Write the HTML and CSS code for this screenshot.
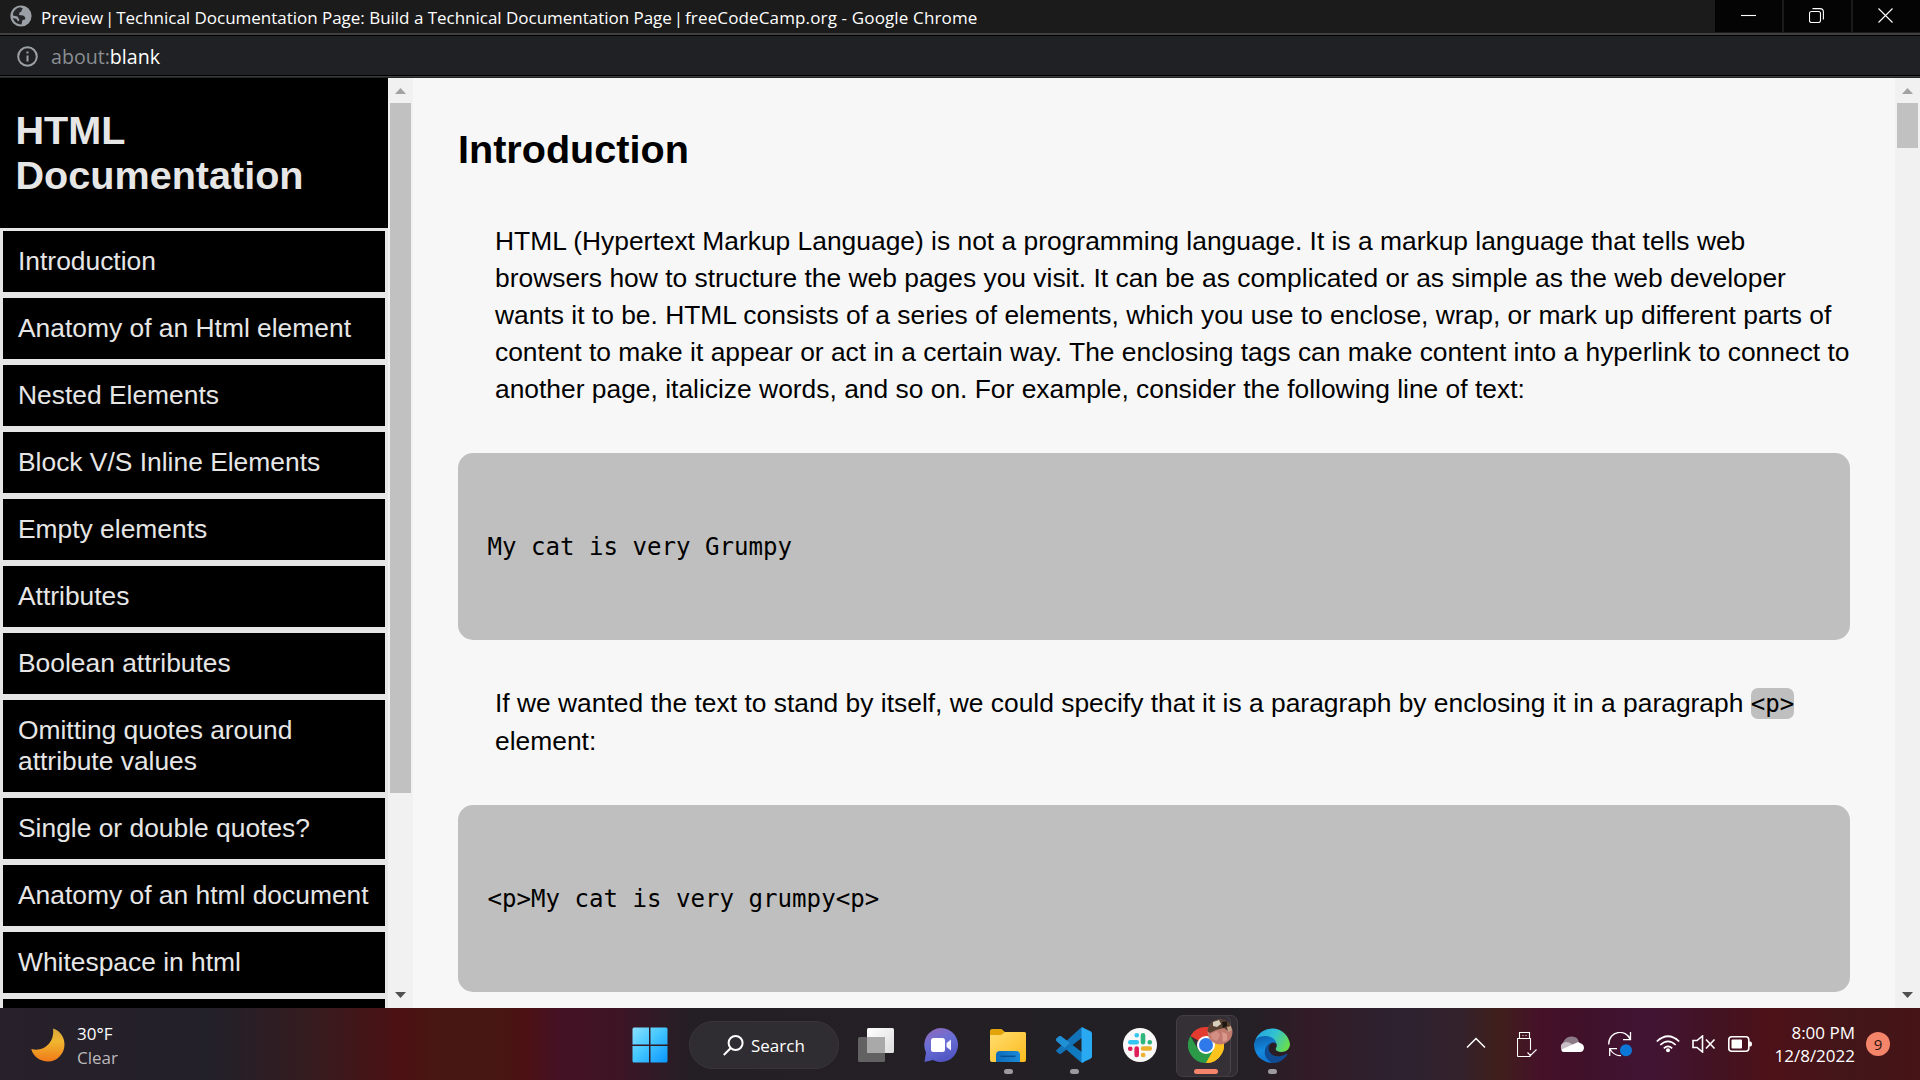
FILE: index.html
```html
<!DOCTYPE html>
<html lang="en">
<head>
<meta charset="utf-8">
<title>Technical Documentation Page</title>
<link rel="stylesheet" href="styles.css">
</head>
<body>
<header class="titlebar">
  <svg class="globe" width="22" height="22" viewBox="0 0 22 22"><circle cx="11" cy="11" r="10.6" fill="#9aa0a6"/><path d="M3 8.500Q4.500 3.500 10 2.300L13 3.400Q11 5 11.500 6.500L9.500 7.500 9 10 13 10.500Q16 12 15 14.500L12.500 15 11.500 19.500Q5 19.500 2.700 13L6.500 14 8 16.500 9.500 15 7.500 11.500 3 10.500Z" fill="#26272a"/><path d="M14 4Q18.500 5.500 19.300 10L17 9.500 16 7Z" fill="#9aa0a6"/></svg>
  <span class="title">Preview <span class="bar">|</span> Technical Documentation Page: Build a Technical Documentation Page <span class="bar">|</span> <span class="site">freeCodeCamp.org - Google Chrome</span></span>
  <div class="controls">
    <span class="control"><svg width="15" height="15" viewBox="0 0 15 15"><path d="M0 7.500H15"/></svg></span>
    <span class="control"><svg width="15" height="15" viewBox="0 0 15 15"><rect x=".5" y="3.500" width="11" height="11" rx="2"/><path d="M3.500 .6H11Q14.400 .6 14.400 4V11.500"/></svg></span>
    <span class="control"><svg width="15" height="15" viewBox="0 0 15 15"><path d="M.5 .5L14.500 14.500M14.500 .5L.5 14.500"/></svg></span>
  </div>
</header>
<div class="addressbar">
  <svg width="21" height="21" viewBox="0 0 21 21" fill="none" stroke="#9aa0a6" stroke-width="2"><circle cx="10.500" cy="10.500" r="9.300"/><path d="M10.500 9.500V15.500M10.500 5.500V7.600"/></svg>
  <span class="url"><span class="scheme">about:</span>blank</span>
</div>
<div class="viewport">
  <nav class="sidebar">
    <h1 class="brand">HTML<br>Documentation</h1>
    <ul class="links">
      <li>Introduction</li>
      <li>Anatomy of an Html element</li>
      <li>Nested Elements</li>
      <li>Block V/S Inline Elements</li>
      <li>Empty elements</li>
      <li>Attributes</li>
      <li>Boolean attributes</li>
      <li>Omitting quotes around<br>attribute values</li>
      <li>Single or double quotes?</li>
      <li>Anatomy of an html document</li>
      <li>Whitespace in html</li>
      <li></li>
    </ul>
  </nav>
  <div class="scrollbar">
    <i class="arrow up"></i><i class="thumb thumb-nav"></i><i class="arrow down"></i>
  </div>
  <main class="content">
    <h2>Introduction</h2>
    <p>HTML (Hypertext Markup Language) is not a programming language. It is a markup language that tells web<br>browsers how to structure the web pages you visit. It can be as complicated or as simple as the web developer<br>wants it to be. HTML consists of a series of elements, which you use to enclose, wrap, or mark up different parts of<br>content to make it appear or act in a certain way. The enclosing tags can make content into a hyperlink to connect to<br>another page, italicize words, and so on. For example, consider the following line of text:</p>
    <pre>My cat is very Grumpy</pre>
    <p class="second">If we wanted the text to stand by itself, we could specify that it is a paragraph by enclosing it in a paragraph <code>&lt;p&gt;</code><br>element:</p>
    <pre>&lt;p&gt;My cat is very grumpy&lt;p&gt;</pre>
  </main>
  <div class="scrollbar">
    <i class="arrow up"></i><i class="thumb thumb-page"></i><i class="arrow down"></i>
  </div>
</div>
<footer class="taskbar">
  <div class="weather">
    <svg width="34" height="34" viewBox="0 0 34 34"><defs><linearGradient id="moon" x1="0" y1="0" x2="0" y2="1"><stop offset="0" stop-color="#d9a83c"/><stop offset=".4" stop-color="#f0b630"/><stop offset="1" stop-color="#f07a18"/></linearGradient></defs><path d="M22 .5C29 2.500 33.500 9 33.500 16.500C33.500 26 26 33.500 17 33.500C9 33.500 2 28.500 .3 21C12 24.500 24 15 22 .5Z" fill="url(#moon)"/></svg>
    <div class="forecast"><span>30°F</span><span class="sky">Clear</span></div>
  </div>
  <div class="apps">
    <div class="app"><svg width="36" height="36" viewBox="0 0 36 36"><defs><linearGradient id="win" gradientUnits="userSpaceOnUse" x1="0" y1="0" x2="36" y2="36"><stop offset="0" stop-color="#8be0ff"/><stop offset=".45" stop-color="#47c8ff"/><stop offset="1" stop-color="#0895ff"/></linearGradient></defs><path d="M2 .5H17V17.500H.5V2Q.5 .5 2 .5ZM18.500 .5H34Q35.500 .5 35.500 2V17.500H18.500ZM.5 19H17V35.500H2Q.5 35.500 .5 34ZM18.500 19H35.500V34Q35.500 35.500 34 35.500H18.500Z" fill="url(#win)"/></svg></div>
    <div class="search"><svg width="21" height="21" viewBox="0 0 21 21" fill="none" stroke="#fff" stroke-width="2"><circle cx="12.600" cy="8" r="7"/><path d="M7.500 13.200L.8 20"/></svg><span>Search</span></div>
    <div class="app"><svg width="36" height="36" viewBox="0 0 36 36"><defs><linearGradient id="tv" x1="0" y1="0" x2="1" y2="1"><stop offset="0" stop-color="#fff"/><stop offset="1" stop-color="#dcdcdc"/></linearGradient></defs><rect x="0" y="10" width="27" height="25" rx="1.500" fill="#626262"/><rect x="9" y="1" width="27" height="25" rx="1.500" fill="url(#tv)"/><rect x="9" y="10" width="18" height="16" fill="#a9a9a9"/></svg></div>
    <div class="app chat"><svg width="36" height="36" viewBox="0 0 36 36"><defs><linearGradient id="chat" x1="0" y1="0" x2=".4" y2="1"><stop offset="0" stop-color="#9468b4"/><stop offset=".5" stop-color="#6a6fd6"/><stop offset="1" stop-color="#5357c4"/></linearGradient></defs><path d="M18 1A17 17 0 1 1 10 33L1.500 35 3 25.500A17 17 0 0 1 18 1Z" fill="url(#chat)"/><rect x="8" y="11" width="14" height="14" rx="2.500" fill="#fff"/><path d="M23.500 16L28 12.500V23.500L23.500 20Z" fill="#f1f1ff"/></svg></div>
    <div class="app open"><svg width="36" height="36" viewBox="0 0 36 36"><defs><linearGradient id="folder" x1="0" y1="0" x2="1" y2="1"><stop offset="0" stop-color="#ffdd70"/><stop offset="1" stop-color="#fdbb1c"/></linearGradient><linearGradient id="tray" x1="0" y1="0" x2="1" y2="0"><stop offset="0" stop-color="#0e6cba"/><stop offset="1" stop-color="#1a8ad8"/></linearGradient></defs><path d="M0 4Q0 2 2 2H11.500L15 5H34Q36 5 36 7V12H0Z" fill="#e2a30b"/><path d="M0 8H11L15 5H34Q36 5 36 7V33Q36 35 34 35H2Q0 35 0 33Z" fill="url(#folder)"/><path d="M6 35V28Q6 24 10 24H26Q30 24 30 28V35Z" fill="url(#tray)"/><path d="M10.500 29.300H25.500" stroke="#0a4f91" stroke-width="1.500"/></svg></div>
    <div class="app open"><svg width="36" height="36" viewBox="0 0 36 36"><path d="M.5 11.500L3 9.300Q4 8.700 5 9.300L27 26V35.500Q25.500 35.800 24 34.500L.5 14Q-.3 12.700 .5 11.500Z" fill="#0f7ac0"/><path d="M.5 23L24 1.500Q25.500 .1 27 .6V10L5 26.800Q4 27.400 3 26.700L.5 24.500Q-.2 23.700 .5 23Z" fill="#1273b8"/><path d="M.5 11.500L3 9.300Q4 8.700 5 9.300L14 16 8.500 21 .5 14Q-.3 12.700 .5 11.500Z" fill="#2090d5"/><path d="M26 .3L34.500 4.300Q36 5 36 6.500V29.500Q36 31 34.500 31.700L26 35.700Q27 35 27 33V3Q27 1 26 .3Z" fill="#28a9f2"/><path d="M25.500 .6Q27.500 .5 28 1V35Q27 36 25.500 35.500Z" fill="#28a9f2"/></svg></div>
    <div class="app"><svg width="34" height="34" viewBox="0 0 34 34"><circle cx="17" cy="17" r="17" fill="#f8f8f8"/><g stroke-linecap="round" stroke-width="4.600"><path d="M13.800 7.300H13.700M7.300 14.200H13.800" stroke="#36c5f0"/><path d="M20 7.300V14.200M26.800 14.200H26.700" stroke="#2eb67d"/><path d="M20 20.500H26.800M20.200 27H20.100" stroke="#ecb22e"/><path d="M13.700 20.500V27M7.300 20.700H7.200" stroke="#e01e5a"/></g></svg></div>
    <div class="app active"><svg width="36" height="36" viewBox="0 0 36 36"><path d="M18 18L2.410 9A18 18 0 0 1 33.590 9Z" fill="#e33b2e"/><path d="M18 18L33.590 9A18 18 0 0 1 18 36Z" fill="#fcc31e"/><path d="M2.410 9A18 18 0 0 0 18 36L25.800 22.500 10.200 22.500Z" fill="#2b9b49"/><path d="M18 9H33.590A18 18 0 0 1 18 36L25.800 22.500Z" fill="#fcc31e"/><circle cx="18" cy="18" r="9" fill="#fff"/><circle cx="18" cy="18" r="7" fill="#3079ea"/></svg>
      <svg class="avatar" width="26" height="26" viewBox="0 0 26 26"><defs><clipPath id="face"><circle cx="13" cy="13" r="12.500"/></clipPath></defs><g clip-path="url(#face)"><rect width="26" height="26" fill="#c07a6e"/><path d="M0 0H26V10L21 12 17 9 9 11 3 14 0 12Z" fill="#57402f"/><path d="M6 3L12 1 14 5 10 8 6 7Z" fill="#d8cfbd"/><path d="M15 3L20 2 20 7 16 9Z" fill="#1e1713"/><path d="M20 8L24 7 25 11 21 13Z" fill="#c5a48c"/><path d="M4 15L10 12 13 16 10 22 5 20Z" fill="#d38f83"/><path d="M15 13L20 15 20 21 16 23Z" fill="#da988c"/></g></svg></div>
    <div class="app open"><svg width="36" height="36" viewBox="0 0 36 36"><defs><linearGradient id="wave" x1="0" y1=".2" x2="1" y2=".6"><stop offset="0" stop-color="#22a3e0"/><stop offset=".5" stop-color="#32c2d3"/><stop offset="1" stop-color="#68dd4c"/></linearGradient><linearGradient id="sea" x1="0" y1="0" x2=".3" y2="1"><stop offset="0" stop-color="#0d5ba8"/><stop offset=".6" stop-color="#1489df"/><stop offset="1" stop-color="#1176cf"/></linearGradient></defs><path d="M1 14A18 18 0 0 1 36 17C36 22 32 25 27.500 25C23 25 21 23 22 21C25 16 19 10 12 10Q5 10 1 14Z" fill="url(#wave)"/><path d="M0 18C0 12 5 9 11 9C18 9 22 13 22.500 17C18 13 13 18 14 24C15 30 19 34 24 34.800A18 18 0 0 1 0 18Z" fill="url(#sea)"/><path d="M16.500 15.500C12.500 19 14 31 27 29Q31 28 33 26.500Q34 27.500 32 29.500Q27 35.500 20 36C10 34 7 21 16.500 15.500Z" fill="#104c93"/></svg></div>
  </div>
  <div class="tray">
    <svg class="chevron" width="20" height="12" viewBox="0 0 20 12"><path d="M1 10.500L10 1.500 19 10.500" stroke-width="1.500"/></svg>
    <svg class="usb" width="20" height="25" viewBox="0 0 20 25"><path d="M2.500 6.500V.5H12.500V6.500M.5 24.500V6.500H13.500V18M.5 24.500H13V22M5.500 3.500H6.500M8.500 3.500H9.500M10.500 20.500L13.500 23.500 19.500 17.500"/></svg>
    <svg class="cloud" width="24" height="17" viewBox="0 0 24 17"><path d="M4 16A4.500 5.500 0 0 1 3 6.500Q6 0 12 .5Q18 .5 19 6.500L10 13Z" fill="#8d7a87" stroke="none"/><path d="M1 9Q4 4.500 9 6.500L17 11 6 15Q0 16 1 9Z" fill="#c9bfc7" stroke="none"/><path d="M4 16Q1 15.500 1.500 13.500L16 7Q18 5.500 20.500 7.200Q24 8.500 24 12Q23.500 16 20 16Z" fill="#fff" stroke="none"/></svg>
    <svg class="sync" width="25" height="25" viewBox="0 0 25 25"><path d="M.7 12.500C.7 -1.500 18 -3.500 22.300 7.500M22.500 0V7.700H15M1.700 24V16.700H9M1.900 17Q6 24 13 23.600" stroke-width="1.300"/><circle cx="18" cy="18.300" r="6" fill="#0b78d8" stroke="none"/></svg>
    <svg class="wifi" width="24" height="18" viewBox="0 0 24 18"><path d="M.8 6.500Q12-4 23.200 6.500M4.300 10Q12 2.700 19.700 10M7.800 13.300Q12 9.300 16.200 13.300" stroke-width="1.700"/><circle cx="12" cy="15.300" r="2" fill="#fff" stroke="none"/></svg>
    <svg class="volume" width="24" height="18" viewBox="0 0 24 18"><path d="M1 5.500H5L10.500 1V17L5 12.500H1ZM14 4.500L22.500 13.500M22.500 4.500L14 13.500" stroke-width="1.600"/></svg>
    <svg class="battery" width="25" height="16" viewBox="0 0 25 16"><rect x=".8" y=".8" width="20" height="14.400" rx="3" stroke-width="1.600"/><rect x="3.500" y="3.500" width="10.500" height="9" rx="1" fill="#fff" stroke="none"/><path d="M21 5.500H22.500Q24 5.500 24 8Q24 10.500 22.500 10.500H21Z" fill="#fff" stroke="none"/></svg>
    <div class="clock"><span class="time">8:00 PM</span><span>12/8/2022</span></div>
    <span class="count">9</span>
  </div>
</footer>
</body>
</html>
```

FILE: styles.css
```css
* { box-sizing: border-box; }
html, body { height: 100%; overflow: hidden; }
body { margin: 0; display: flex; flex-direction: column; background: #f7f7f7; font-family: "Liberation Sans", Arial, sans-serif; }
svg { flex: none; display: block; }

.titlebar { height: 36px; flex: none; display: flex; align-items: flex-start; padding-left: 10px; background: #1b1b1b; border-bottom: 1px solid #000; box-shadow: inset 0 -2px #404040; color: #fff; font-family: "Open Sans", "Noto Sans", sans-serif; }
.globe { margin-top: 5px; }
.title { margin-left: 9px; font-size: 17px; line-height: 36px; letter-spacing: -0.02px; white-space: nowrap; }
.site { letter-spacing: 0.14px; }
.bar { margin: 0 -2.5px; }
.controls { margin-left: auto; display: flex; gap: 2px; height: 32px; }
.control { width: 67px; padding-left: 26px; background: #040404; display: flex; }
.control + .control { padding-left: 25px; }
.control svg { margin-top: 8px; fill: none; stroke: #fff; stroke-width: 1.1; }

.addressbar { height: 42px; flex: none; display: flex; align-items: flex-start; padding: 10px 0 0 17px; background: #202124; box-shadow: inset 0 -1px #242424, inset 0 -2px #3c3c3c, inset 0 -3px #000; }
.url { margin-left: 13px; font: 19.6px/22px "Open Sans", "Noto Sans", sans-serif; color: #fff; }
.scheme { color: #8b8e92; }

.viewport { height: 930px; flex: none; display: flex; overflow: hidden; background: #f7f7f7; }
.sidebar { width: 388px; flex: none; overflow: hidden; background: #000; color: #e6e6e6; }
.brand { height: 150px; margin: 0; padding: 30px 15.5px 0; font-size: 39.6px; line-height: 45px; font-weight: 700; }
.links { list-style: none; margin: 0; padding: 0; }
.links li { min-height: 67px; border: 3px solid #e6e6e6; padding: 15px; background: #000; font-size: 26.4px; line-height: 31px; white-space: nowrap; }

.scrollbar { width: 25px; flex: none; display: flex; flex-direction: column; align-items: center; padding: 10px 0; background: #f1f1f1; }
.arrow { width: 11px; height: 6px; }
.up { background: #a3a3a3; clip-path: polygon(50% 0, 100% 100%, 0 100%); }
.down { margin-top: auto; background: #505050; clip-path: polygon(0 0, 100% 0, 50% 100%); }
.thumb { width: 21px; margin-top: 9px; background: #c1c1c1; }
.thumb-nav { height: 690px; }
.thumb-page { height: 45px; }

.content { width: 1482px; flex: none; padding: 48px 45px 0; color: #000; }
h2 { margin: 0; font-size: 39.6px; line-height: 46px; }
p { margin: 51px 0 45px 37px; font-size: 26.4px; line-height: 37px; white-space: nowrap; }
.second { margin: 44px 0 45px 37px; line-height: 38px; }
pre { height: 187px; margin: 0; padding: 0 29.5px; border-radius: 15px; background: #bfbfbf; font: 24.1px/188px "DejaVu Sans Mono", monospace; }
code { padding: 2px 0 1px; border-radius: 7px; background: #bfbfbf; font: 24.1px/1 "DejaVu Sans Mono", monospace; }

.taskbar { height: 72px; flex: none; display: grid; grid-template-columns: 617px 688px 1fr; color: #fff; font-family: "Open Sans", "Noto Sans", sans-serif; background: linear-gradient(90deg, #28202a 0, #222029 210px, #351c1f 310px, #4c1113 400px, #471713 440px, #471713 495px, #4c1113 525px, #451225 560px, #3d1525 620px, #241f25 690px, #222025 1240px, #321b27 1310px, #2d2230 1400px, #33212b 1460px, #401f1b 1500px, #451129 1540px, #401129 1580px, #411434 1650px, #431321 1720px, #4d1118 1770px, #421619 1850px, #461316 1920px); }
.weather { display: flex; padding: 20px 0 0 31px; font-size: 17px; }
.forecast { display: flex; flex-direction: column; margin: -6px 0 0 12px; line-height: 24px; }
.sky { color: #bdb9bd; }
.apps { display: flex; align-items: stretch; }
.app { width: 66px; display: flex; align-items: center; justify-content: center; position: relative; padding-top: 2px; }
.chat { padding-right: 2px; }
.app.open::after, .app.active::after { content: ""; position: absolute; bottom: 6px; width: 9px; height: 5px; border-radius: 3px; background: #9c9a9d; }
.app.active::after { width: 24px; background: #f4846a; }
.app.active::before { content: ""; position: absolute; left: 3px; top: 7px; width: 60px; height: 60px; border: 1px solid #423e44; border-radius: 7px; background: #343036; box-shadow: inset -6px 0 #302c32, inset -7px 0 #48444a; }
.app svg { position: relative; }
.app .avatar { position: absolute; left: 34px; top: 11px; }
.search { width: 150px; height: 48px; margin: 13px 4px 0 6px; border-radius: 24px; border: 1px solid #38353a; background: #302d32; display: flex; align-items: center; padding-left: 33px; font-size: 17px; }
.search span { margin-left: 7px; }
.tray { display: flex; align-items: flex-start; padding-left: 161px; }
.tray svg { fill: none; stroke: #fff; stroke-width: 1.1; }
.chevron { margin-top: 29px; }
.usb { margin: 24px 0 0 31px; }
.cloud { margin: 28px 0 0 23px; }
.sync { margin: 24px 0 0 24px; }
.wifi { margin: 27px 0 0 23px; }
.volume { margin: 27px 0 0 12px; }
.battery { margin: 28px 0 0 12px; }
.clock { width: 102px; display: flex; flex-direction: column; text-align: right; font-size: 17px; line-height: 23px; padding-top: 13px; }
.count { width: 24px; height: 24px; margin: 24px 0 0 11px; border-radius: 50%; background: #f4846a; color: #2a1410; text-align: center; font-size: 15px; line-height: 24px; }
```
